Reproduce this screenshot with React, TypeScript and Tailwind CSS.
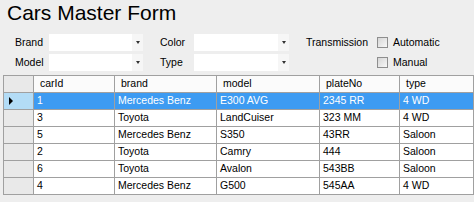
import React from "react";

const rows = [
  ["1", "Mercedes Benz", "E300 AVG", "2345 RR", "4 WD"],
  ["3", "Toyota", "LandCuiser", "323 MM", "4 WD"],
  ["5", "Mercedes Benz", "S350", "43RR", "Saloon"],
  ["2", "Toyota", "Camry", "444", "Saloon"],
  ["6", "Toyota", "Avalon", "543BB", "Saloon"],
  ["4", "Mercedes Benz", "G500", "545AA", "4 WD"],
];

const headers = ["carId", "brand", "model", "plateNo", "type"];

function Combo({ w }: { w: string }) {
  return (
    <div className={`flex h-[17px] ${w} bg-white`}>
      <div className="flex-1" />
      <div className="flex w-[11px] items-center justify-center bg-[#f6f6f6]">
        <div className="h-0 w-0 border-x-[2px] border-t-[3px] border-x-transparent border-t-[#333]" />
      </div>
    </div>
  );
}

function Check() {
  return (
    <div className="h-[11px] w-[11px] border border-[#8e8e8e] bg-gradient-to-br from-[#d6d6d6] to-[#f8f8f8]" />
  );
}

export default function App() {
  return (
    <div
      className="h-[202px] w-[474px] overflow-hidden bg-[#eeeeee] text-[10.5px] text-black"
      style={{ fontFamily: '"Liberation Sans", Arial, sans-serif' }}
    >
      <div className="pl-[7px] pt-[1px] text-[21px] leading-[24px]">Cars Master Form</div>
      <div className="mt-[9px] flex h-[17px] items-center pl-[15px]">
        <div className="w-[34px]">Brand</div>
        <Combo w="w-[94px]" />
        <div className="w-[17px]" />
        <div className="w-[34px]">Color</div>
        <Combo w="w-[95px]" />
        <div className="w-[17px]" />
        <div className="w-[71px]">Transmission</div>
        <Check />
        <div className="ml-[5px]">Automatic</div>
      </div>
      <div className="mt-[3px] flex h-[17px] items-center pl-[15px]">
        <div className="w-[34px]">Model</div>
        <Combo w="w-[94px]" />
        <div className="w-[17px]" />
        <div className="w-[34px]">Type</div>
        <Combo w="w-[95px]" />
        <div className="w-[17px]" />
        <div className="w-[71px]" />
        <Check />
        <div className="ml-[5px]">Manual</div>
      </div>
      <div className="ml-[3px] mt-[4px] border-l border-t border-[#a0a0a0]">
        <div className="grid grid-cols-[30px_81px_102px_103px_80px_1fr]">
          <div className="h-[17px] border-b border-r border-[#a0a0a0] bg-[#e9e9e9]" />
          {headers.map((h) => (
            <div
              key={h}
              className="flex h-[17px] items-center border-b border-r border-[#a0a0a0] bg-[#fbfbfb] pl-[6px]"
            >
              {h}
            </div>
          ))}
          {rows.map((r, i) => {
            const sel = i === 0;
            return (
              <React.Fragment key={i}>
                <div
                  className={`flex h-[17px] items-center border-b border-r border-[#a0a0a0] pl-[5px] ${
                    sel ? "bg-[#b3dcf6]" : "bg-[#e9e9e9]"
                  }`}
                >
                  {sel && (
                    <div className="h-0 w-0 border-y-[4px] border-l-[4px] border-y-transparent border-l-black" />
                  )}
                </div>
                {r.map((c, j) => (
                  <div
                    key={j}
                    className={`flex h-[17px] items-center border-b border-r border-[#a0a0a0] pl-[3px] ${
                      sel ? "bg-[#3d9bf2] text-white" : "bg-white"
                    }`}
                  >
                    {c}
                  </div>
                ))}
              </React.Fragment>
            );
          })}
        </div>
      </div>
    </div>
  );
}
